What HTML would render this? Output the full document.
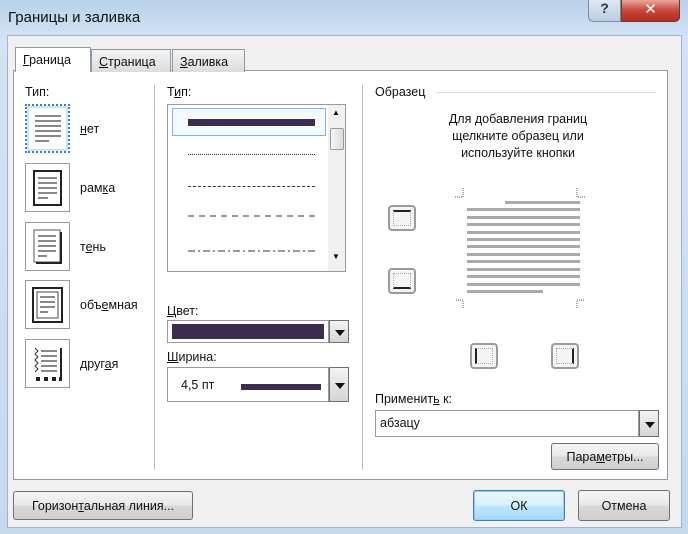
<!DOCTYPE html>
<html><head><meta charset="utf-8"><style>
*{margin:0;padding:0;box-sizing:border-box}
body{width:688px;height:534px;overflow:hidden;background:#c2d8ee;font-family:"Liberation Sans","DejaVu Sans",sans-serif;font-size:12px;color:#111;position:relative}
.a{position:absolute}
.frame{left:0;top:0;width:688px;height:534px;background:linear-gradient(180deg,#b9d1ea 0,#d3e3f3 40px,#c4d9ee 100%)}
.inner{left:7px;top:35px;width:675px;height:493px;background:#f0f0f0;border:1px solid #9fb5cc}
.panel{left:13px;top:70px;width:655px;height:410px;background:#fff;border:1px solid #8e9aa8}
.tab{height:23px;border:1px solid #8e9aa8;border-bottom:none;background:linear-gradient(#f4f4f4,#dcdcdc);padding:5px 0 0 7px;font-size:12.5px}
.btn{border:1px solid #707070;border-radius:3px;background:linear-gradient(#f4f4f4 0,#e8e8e8 50%,#d8d8d8 51%,#cfcfcf);text-align:center;font-size:12.5px}
.ico{width:45px;height:49px;border:1px solid #999;background:#fff}
.lbl{font-size:12.5px}
.gl{background:#aaa;height:3px;left:467px;width:113px}
.cb{border:1px solid #9a9a9a;background:#fff}
.arr{border:1px solid #707070;background:linear-gradient(#f3f3f3,#d5d5d5);width:20px}
.arr:after{content:"";position:absolute;left:5px;top:50%;margin-top:-2px;border-left:5px solid transparent;border-right:5px solid transparent;border-top:6px solid #111}
.sb{width:28px;height:26px;border:2px solid #9b9b9b;border-radius:4px;background:#f4f4f4}
u{text-decoration:underline}
</style></head><body>
<div class="a frame"></div>
<div class="a" style="left:8px;top:9px;font-size:15px;color:#111">Границы и заливка</div>
<div class="a" style="left:588px;top:0;width:33px;height:22px;border:1px solid #7a8ea6;border-top:none;border-radius:0 0 0 5px;background:linear-gradient(#dfe9f4,#b8cce2);text-align:center;font-size:14px;color:#333;font-weight:bold">?</div>
<div class="a" style="left:621px;top:0;width:59px;height:22px;border:1px solid #7a3030;border-top:none;border-radius:0 0 5px 0;background:linear-gradient(#e9a89a,#c7473a 50%,#b52a1e);text-align:center;font-size:15px;color:#fff;font-weight:bold">✕</div>
<div class="a inner"></div>
<div class="a panel"></div>
<div class="a tab" style="left:15px;top:47px;width:76px;height:25px;background:#fff;border-color:#8e9aa8;z-index:2"><u>Г</u>раница</div>
<div class="a tab" style="left:91px;top:49px;width:80px"><u>С</u>траница</div>
<div class="a tab" style="left:172px;top:49px;width:73px"><u>З</u>аливка</div>

<div class="a lbl" style="left:25px;top:85px">Тип:</div>
<div class="a ico" style="left:25px;top:104px;border:2px dotted #3a7ec8;box-shadow:inset 0 0 0 2px #cde3f7">
<svg width="41" height="45"><g stroke="#888" stroke-width="2"><line x1="8" y1="10" x2="34" y2="10"/><line x1="8" y1="15" x2="34" y2="15"/><line x1="8" y1="20" x2="34" y2="20"/><line x1="8" y1="25" x2="34" y2="25"/><line x1="8" y1="30" x2="34" y2="30"/><line x1="8" y1="35" x2="22" y2="35"/></g></svg></div>
<div class="a lbl" style="left:80px;top:122px"><u>н</u>ет</div>
<div class="a ico" style="left:25px;top:163px"><svg width="43" height="47"><rect x="8" y="7" width="27" height="34" fill="none" stroke="#222" stroke-width="2"/><g stroke="#888" stroke-width="2"><line x1="12" y1="14" x2="31" y2="14"/><line x1="12" y1="19" x2="31" y2="19"/><line x1="12" y1="24" x2="31" y2="24"/><line x1="12" y1="29" x2="31" y2="29"/><line x1="12" y1="34" x2="22" y2="34"/></g></svg></div>
<div class="a lbl" style="left:80px;top:181px">рам<u>к</u>а</div>
<div class="a ico" style="left:25px;top:222px"><svg width="43" height="47"><rect x="8" y="7" width="26" height="32" fill="none" stroke="#555" stroke-width="1"/><path d="M35 9V40H10" fill="none" stroke="#222" stroke-width="2"/><g stroke="#888" stroke-width="2"><line x1="12" y1="13" x2="30" y2="13"/><line x1="12" y1="18" x2="30" y2="18"/><line x1="12" y1="23" x2="30" y2="23"/><line x1="12" y1="28" x2="30" y2="28"/><line x1="12" y1="33" x2="21" y2="33"/></g></svg></div>
<div class="a lbl" style="left:80px;top:240px">т<u>е</u>нь</div>
<div class="a ico" style="left:25px;top:280px"><svg width="43" height="47"><rect x="7" y="7" width="29" height="34" fill="none" stroke="#222" stroke-width="2"/><rect x="11" y="11" width="21" height="26" fill="none" stroke="#444" stroke-width="1"/><g stroke="#888" stroke-width="2"><line x1="14" y1="16" x2="29" y2="16"/><line x1="14" y1="21" x2="29" y2="21"/><line x1="14" y1="26" x2="29" y2="26"/><line x1="14" y1="31" x2="22" y2="31"/></g></svg></div>
<div class="a lbl" style="left:80px;top:298px">объ<u>е</u>мная</div>
<div class="a ico" style="left:25px;top:339px"><svg width="43" height="47"><path d="M9 8l3 3-3 3 3 3-3 3 3 3-3 3 3 3-3 3" fill="none" stroke="#333"/><line x1="35" y1="8" x2="35" y2="38" stroke="#222" stroke-width="2"/><g fill="#222"><rect x="10" y="37" width="4" height="4"/><rect x="18" y="37" width="4" height="4"/><rect x="26" y="37" width="4" height="4"/><rect x="33" y="37" width="3" height="4"/></g><g stroke="#888" stroke-width="2"><line x1="15" y1="11" x2="31" y2="11"/><line x1="15" y1="16" x2="31" y2="16"/><line x1="15" y1="21" x2="31" y2="21"/><line x1="15" y1="26" x2="31" y2="26"/><line x1="15" y1="31" x2="31" y2="31"/></g></svg></div>
<div class="a lbl" style="left:80px;top:357px">друг<u>а</u>я</div>

<div class="a" style="left:154px;top:85px;width:1px;height:385px;background:#bbb"></div>
<div class="a lbl" style="left:167px;top:85px">Т<u>и</u>п:</div>
<div class="a cb" style="left:167px;top:104px;width:179px;height:168px"></div>
<div class="a" style="left:172px;top:108px;width:154px;height:28px;border:1px solid #7eb4ea;background:#f4f9fe"></div>
<div class="a" style="left:188px;top:119px;width:127px;height:7px;background:#3c2c50"></div>
<div class="a" style="left:188px;top:154px;width:127px;border-top:1px dotted #333"></div>
<div class="a" style="left:188px;top:186px;width:127px;border-top:1px dashed #333"></div>
<svg class="a" style="left:188px;top:214px" width="128" height="45"><line x1="0" y1="2" x2="127" y2="2" stroke="#333" stroke-dasharray="6,5"/><line x1="0" y1="37" x2="127" y2="37" stroke="#333" stroke-dasharray="7,3,2,3"/></svg>
<div class="a" style="left:328px;top:105px;width:17px;height:166px;background:#f0f0f0"></div>
<div class="a" style="left:332px;top:108px;font-size:8px">▲</div>
<div class="a" style="left:330px;top:128px;width:14px;height:22px;border:1px solid #999;border-radius:2px;background:linear-gradient(90deg,#f5f5f5,#dcdcdc)"></div>
<div class="a" style="left:332px;top:252px;font-size:8px">▼</div>

<div class="a lbl" style="left:167px;top:304px"><u>Ц</u>вет:</div>
<div class="a cb" style="left:167px;top:320px;width:162px;height:23px"></div>
<div class="a" style="left:172px;top:324px;width:152px;height:15px;background:#3c2c50"></div>
<div class="a arr" style="left:329px;top:320px;height:23px"></div>
<div class="a lbl" style="left:167px;top:350px"><u>Ш</u>ирина:</div>
<div class="a cb" style="left:167px;top:367px;width:162px;height:35px"></div>
<div class="a lbl" style="left:181px;top:378px">4,5 пт</div>
<div class="a" style="left:241px;top:384px;width:80px;height:6px;background:#3c2c50"></div>
<div class="a arr" style="left:329px;top:367px;height:35px"></div>

<div class="a" style="left:362px;top:85px;width:1px;height:385px;background:#bbb"></div>
<div class="a lbl" style="left:375px;top:85px">Образец</div>
<div class="a" style="left:436px;top:92px;width:220px;height:1px;background:#ddd"></div>
<div class="a lbl" style="left:420px;top:111px;width:196px;text-align:center;line-height:17px">Для добавления границ щелкните образец или используйте кнопки</div>
<svg class="a" style="left:450px;top:185px" width="140" height="125" fill="none" stroke="#555" stroke-dasharray="1,1"><path d="M13 3V12H5"/><path d="M127 3V12H135"/><path d="M13 123V115H5"/><path d="M127 123V115H135"/></svg>
<div class="a gl" style="left:505px;width:75px;top:201px"></div>
<div class="a gl" style="top:208px"></div><div class="a gl" style="top:215.5px"></div><div class="a gl" style="top:223px"></div><div class="a gl" style="top:230.5px"></div><div class="a gl" style="top:238px"></div><div class="a gl" style="top:245px"></div><div class="a gl" style="top:252.5px"></div><div class="a gl" style="top:260px"></div><div class="a gl" style="top:267.5px"></div><div class="a gl" style="top:275px"></div><div class="a gl" style="top:282.5px"></div>
<div class="a gl" style="top:290px;width:76px"></div>
<div class="a sb" style="left:388px;top:205px"><div class="a" style="left:3px;top:3px;width:18px;height:16px;border:1px dotted #aaa;border-top:2px solid #222"></div></div>
<div class="a sb" style="left:388px;top:268px"><div class="a" style="left:3px;top:3px;width:18px;height:16px;border:1px dotted #aaa;border-bottom:2px solid #222"></div></div>
<div class="a sb" style="left:470px;top:343px"><div class="a" style="left:3px;top:3px;width:18px;height:16px;border:1px dotted #aaa;border-left:2px solid #222"></div></div>
<div class="a sb" style="left:551px;top:343px"><div class="a" style="left:3px;top:3px;width:18px;height:16px;border:1px dotted #aaa;border-right:2px solid #222"></div></div>

<div class="a lbl" style="left:375px;top:392px">Применит<u>ь</u> к:</div>
<div class="a cb" style="left:375px;top:410px;width:264px;height:27px"></div>
<div class="a lbl" style="left:380px;top:416px">абзацу</div>
<div class="a arr" style="left:639px;top:410px;height:27px"></div>
<div class="a btn" style="left:551px;top:443px;width:108px;height:27px;padding-top:6px">Пара<u>м</u>етры...</div>

<div class="a btn" style="left:13px;top:491px;width:180px;height:29px;padding-top:7px">Горизон<u>т</u>альная линия...</div>
<div class="a btn" style="left:473px;top:490px;width:92px;height:31px;padding-top:8px;border-color:#3c7fb1;box-shadow:inset 0 0 0 1px #8fd0f5;background:linear-gradient(#eaf6fd,#d9f0fc 50%,#bee6fd 51%,#a7d9f5)">ОК</div>
<div class="a btn" style="left:578px;top:490px;width:92px;height:31px;padding-top:8px">Отмена</div>
</body></html>
